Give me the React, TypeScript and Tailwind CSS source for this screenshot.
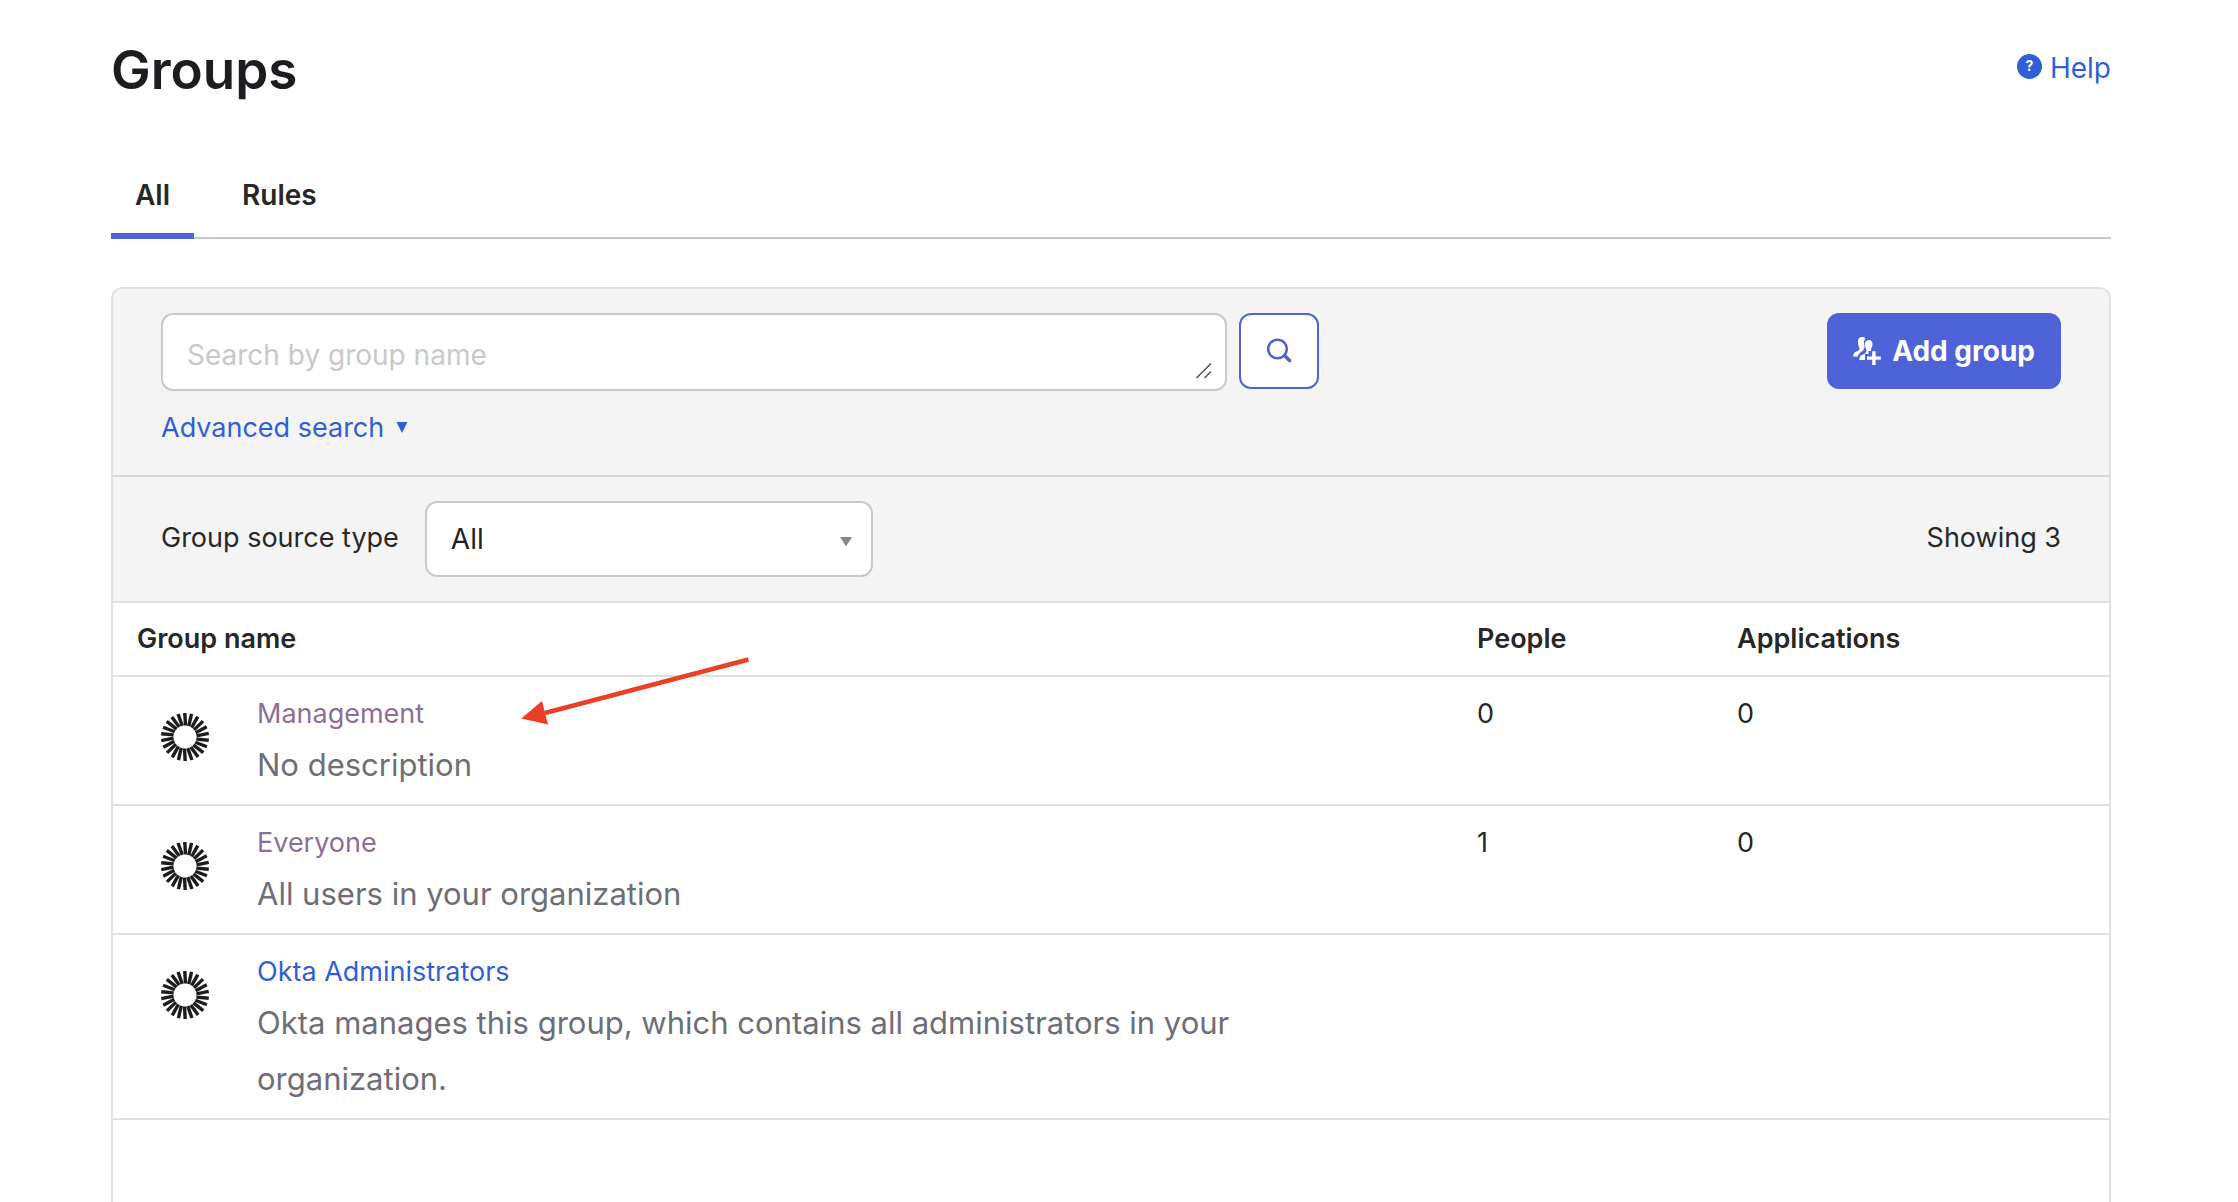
import React from "react";

type Group = {
  name: string;
  description: string;
  people?: number;
  applications?: number;
  visited?: boolean;
  marked?: boolean;
};

const groups: Group[] = [
  { name: "Management", description: "No description", people: 0, applications: 0, visited: true, marked: true },
  { name: "Everyone", description: "All users in your organization", people: 1, applications: 0, visited: true },
  {
    name: "Okta Administrators",
    description: "Okta manages this group, which contains all administrators in your organization.",
  },
];

const RAYS = 22;

function SunburstIcon() {
  return (
    <svg width="48" height="48" viewBox="0 0 48 48" aria-hidden="true" className="block">
      {Array.from({ length: RAYS }, (_, i) => (
        <path
          key={i}
          d="M24.5 12.5 L23.8 0"
          stroke="#1c1c1c"
          strokeWidth="3.4"
          transform={`rotate(${(i * 360) / RAYS} 24 24)`}
        />
      ))}
    </svg>
  );
}

function HelpIcon() {
  return (
    <span
      aria-hidden="true"
      className="mb-1 flex size-[25px] items-center justify-center rounded-full bg-[#2e5fd7] text-sm font-bold text-white"
    >
      ?
    </span>
  );
}

function AddGroupIcon() {
  return (
    <svg width="28" height="28" viewBox="0 0 28 28" fill="#fff" aria-hidden="true">
      <path d="M5 4 C5 1.5 7 0 9.3 0 C11 0 12 0.6 12.5 1.4 C11 3 10.600 5 11.400 8 C11.800 10 11.400 11.500 10.500 13 C9.500 14.500 7 15 5.500 17.500 L5 19.500 H0.200 C0.200 16.500 1.500 15.300 4 14.300 C6.500 13.200 6.800 12 6.200 10.500 C5.300 8.800 5 6.500 5 4 Z" />
      <path d="M12 7 C12 4.500 13.700 3 15.900 3 C18.300 3 19.500 4.800 19.500 7 C19.500 9 19 10.500 18 12 V14 H15.500 V17 H12 V23 H6.500 C6.500 19.500 7.500 18.500 10 17.500 C12.500 16.500 13.800 15 13.400 12.500 C12.500 11 12 9 12 7 Z" />
      <path d="M19.200 14.300 H22.600 V19.500 H27.800 V22.800 H22.600 V28 H19.200 V22.800 H14 V19.500 H19.200 Z" />
    </svg>
  );
}

function SearchIcon() {
  return (
    <svg width="26" height="26" viewBox="0 0 26 26" fill="none" stroke="#4f63d9" aria-hidden="true">
      <circle cx="11.500" cy="11" r="9.300" strokeWidth="2.600" />
      <path d="M18.500 17.500 L23.500 22.500" strokeWidth="3.600" strokeLinecap="round" />
    </svg>
  );
}

function Arrow() {
  return (
    <svg
      width="230"
      height="68"
      viewBox="0 0 230 68"
      aria-hidden="true"
      className="pointer-events-none absolute -top-5 left-[408px]"
    >
      <path d="M24 56 L227.500 2.500" stroke="#ea4025" strokeWidth="4.800" />
      <path d="M0.300 61.600 L21 44 L27 67.600 Z" fill="#ea4025" />
    </svg>
  );
}

export default function App() {
  return (
    <main className="flex min-h-screen flex-col bg-white pr-[127px] pl-[111px] font-['Inter',sans-serif] text-[27px] leading-[42px] text-[#272727]">
      <header className="flex items-start justify-between pt-9">
        <h1 className="text-[53px] leading-[68px] font-semibold text-[#1d1d21]">Groups</h1>
        <a href="#help" className="mt-[11px] flex items-center gap-2 text-[28px] text-[#2e5fd7]">
          <HelpIcon />
          Help
        </a>
      </header>

      <nav className="mt-[70px] flex gap-6 border-b-2 border-[#c9c9cc] text-[28px] font-semibold">
        <a href="#all" aria-current="page" className="-mb-0.5 border-b-6 border-[#4f63d9] px-6 pb-[17px]">
          All
        </a>
        <a href="#rules" className="px-6">
          Rules
        </a>
      </nav>

      <section className="mt-12 flex grow flex-col rounded-t-xl border-2 border-b-0 border-[#e1e1e1]">
        <div className="rounded-t-xl border-b-2 border-[#d7d7dc] bg-[#f4f4f4] px-12 pt-6 pb-[26px]">
          <div className="flex items-start justify-between">
            <form className="flex grow items-start gap-3" onSubmit={(e) => e.preventDefault()}>
              <div className="relative flex w-[64%] min-w-0">
                <textarea
                  rows={1}
                  aria-label="Search by group name"
                  placeholder="Search by group name"
                  className="block h-[78px] w-full resize-none overflow-hidden rounded-xl border-2 border-[#c9c9c9] bg-white px-6 pt-[19px] text-[28px] placeholder:text-[#c9c9c9]"
                />
                <svg
                  width="16"
                  height="16"
                  viewBox="0 0 16 16"
                  fill="none"
                  stroke="#555"
                  strokeWidth="1.500"
                  aria-hidden="true"
                  className="pointer-events-none absolute right-[15px] bottom-3"
                >
                  <path d="M0.500 15 L15 0.500 M8.500 15 L15 8.500" />
                </svg>
              </div>
              <button
                type="submit"
                aria-label="Search"
                className="flex h-[76px] w-20 shrink-0 items-center justify-center rounded-xl border-2 border-[#4f63d9] bg-white"
              >
                <SearchIcon />
              </button>
            </form>
            <button
              type="button"
              className="flex h-[76px] shrink-0 items-center gap-[11px] rounded-xl bg-[#4f63d9] px-[26px] text-[28px] font-bold text-white"
            >
              <AddGroupIcon />
              Add group
            </button>
          </div>
          <button type="button" className="mt-4 flex items-center gap-3 text-[#2e5fd7]">
            Advanced search
            <svg width="12" height="12" viewBox="0 0 12 12" fill="#2e5fd7" aria-hidden="true">
              <path d="M0.500 0 H11.500 L6 11 Z" />
            </svg>
          </button>
        </div>

        <div className="flex items-center justify-between border-b-2 border-[#e1e1e1] bg-[#f4f4f4] px-12 py-6">
          <div className="flex items-center gap-[26px]">
            <label htmlFor="source-type" className="pb-0.5">
              Group source type
            </label>
            <div className="relative">
              <select
                id="source-type"
                className="block h-[76px] w-[448px] appearance-none rounded-xl border-2 border-[#c9c9c9] bg-white px-6 text-[28px] text-[#222]"
              >
                <option>All</option>
              </select>
              <svg
                width="12"
                height="10"
                viewBox="0 0 12 10"
                fill="#888"
                aria-hidden="true"
                className="pointer-events-none absolute top-9 right-[21px]"
              >
                <path d="M0 0 H12 L6 9.500 Z" />
              </svg>
            </div>
          </div>
          <span className="pb-0.5">Showing 3</span>
        </div>

        <table className="w-full table-fixed border-collapse text-left">
          <colgroup>
            <col />
            <col className="w-[260px]" />
            <col className="w-[396px]" />
          </colgroup>
          <thead>
            <tr className="h-[73px] border-b-2 border-[#e1e1e1]">
              <th className="px-6 font-semibold">Group name</th>
              <th className="px-6 font-semibold">People</th>
              <th className="px-6 font-semibold">Applications</th>
            </tr>
          </thead>
          <tbody>
            {groups.map((g) => (
              <tr key={g.name} className="border-b-2 border-[#e1e1e1] align-top">
                <td className="p-0">
                  <div className="relative flex gap-12 pt-4 pr-6 pb-[11px] pl-12">
                    <div className="shrink-0 pt-5">
                      <SunburstIcon />
                    </div>
                    <div className="max-w-[1000px]">
                      <a href="#group" className={g.visited ? "block text-[#8b6f96]" : "block text-[#2e5fd7]"}>
                        {g.name}
                      </a>
                      <p className="mt-0.5 text-[31px] leading-[56px] text-[#6e6e78]">{g.description}</p>
                    </div>
                    {g.marked && <Arrow />}
                  </div>
                </td>
                <td className="px-6 pt-4">{g.people}</td>
                <td className="px-6 pt-4">{g.applications}</td>
              </tr>
            ))}
          </tbody>
        </table>
      </section>
    </main>
  );
}
